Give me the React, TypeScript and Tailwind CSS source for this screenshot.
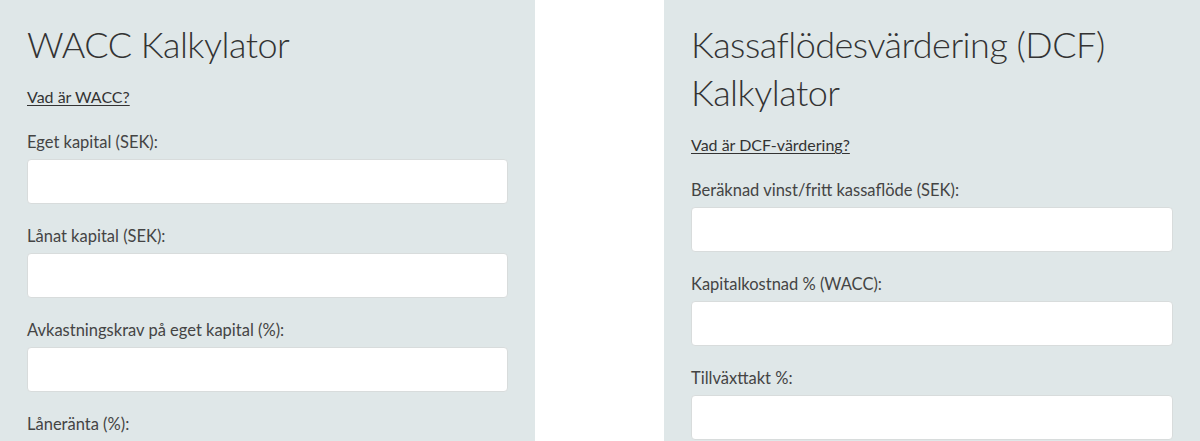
type Field = {
  label: string;
};

const waccFields: Field[] = [
  { label: "Eget kapital (SEK):" },
  { label: "Lånat kapital (SEK):" },
  { label: "Avkastningskrav på eget kapital (%):" },
  { label: "Låneränta (%):" },
  { label: "Skattesats (%):" },
];

const dcfFields: Field[] = [
  { label: "Beräknad vinst/fritt kassaflöde (SEK):" },
  { label: "Kapitalkostnad % (WACC):" },
  { label: "Tillväxttakt %:" },
  { label: "Antal år:" },
];

function FieldRow({ field }: { field: Field }) {
  return (
    <div className="flex flex-col">
      <label className="mb-[6px] text-[16.5px] leading-[22px] text-[#444]">
        {field.label}
      </label>
      <input
        type="text"
        className="h-[45px] w-full rounded-[4px] border border-[#d8dcdc] bg-white px-3 text-[16px] outline-none"
      />
    </div>
  );
}

function Calculator({
  title,
  linkText,
  fields,
  className,
}: {
  title: string;
  linkText: string;
  fields: Field[];
  className: string;
}) {
  return (
    <section className={`bg-[#dfe7e8] px-[27px] pt-[20px] pb-10 ${className}`}>
      <h2 className="mb-[19px] text-[36px] leading-[48px] font-light tracking-[-0.5px] text-[#333]">
        {title}
      </h2>
      <a
        href="#"
        className="block text-[16px] leading-[20px] text-[#333] underline underline-offset-2"
      >
        {linkText}
      </a>
      <div className="mt-[24px] flex flex-col gap-[21px]">
        {fields.map((f) => (
          <FieldRow key={f.label} field={f} />
        ))}
      </div>
    </section>
  );
}

export default function App() {
  return (
    <div className="h-[441px] overflow-hidden bg-white font-['Lato',sans-serif]">
      <div className="flex items-start gap-[129px]">
        <Calculator
          className="w-[535px] shrink-0"
          title="WACC Kalkylator"
          linkText="Vad är WACC?"
          fields={waccFields}
        />
        <Calculator
          className="w-[536px] shrink-0"
          title="Kassaflödesvärdering (DCF) Kalkylator"
          linkText="Vad är DCF-värdering?"
          fields={dcfFields}
        />
      </div>
    </div>
  );
}
